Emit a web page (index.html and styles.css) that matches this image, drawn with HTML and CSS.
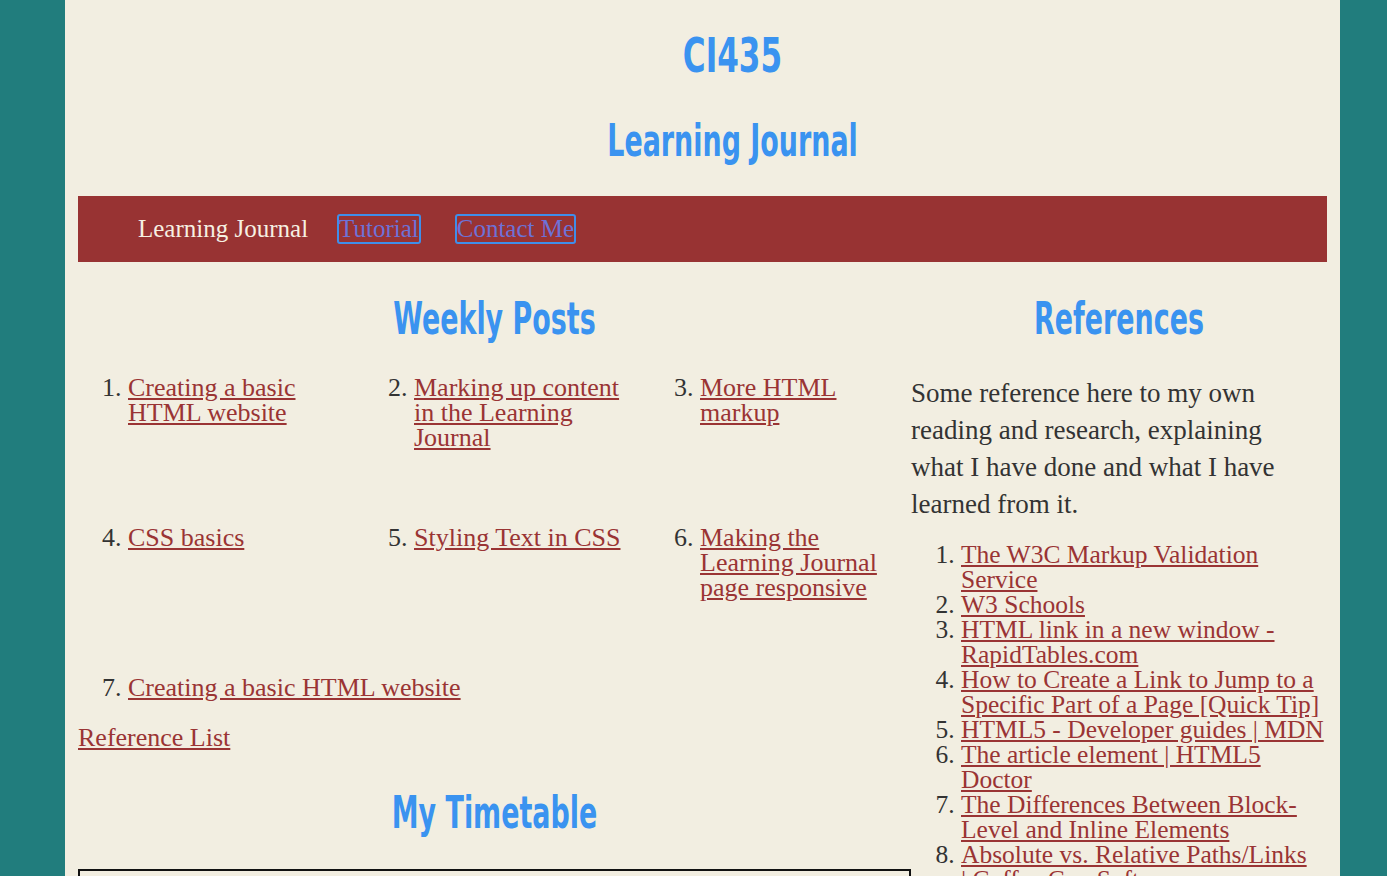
FILE: index.html
```html
<!DOCTYPE html>
<html lang="en">
<head>
<meta charset="utf-8">
<title>CI435 Learning Journal</title>
<link rel="stylesheet" href="styles.css">
</head>
<body>
<div class="page">
  <header class="site-header">
    <h1 class="site-title">CI435</h1>
    <h2 class="site-subtitle">Learning Journal</h2>
  </header>
  <nav class="main-nav">
    <span class="nav-current">Learning Journal</span>
    <a class="nav-link" href="#">Tutorial</a>
    <a class="nav-link" href="#">Contact Me</a>
  </nav>
  <main class="content">
    <section class="posts">
      <h2 class="section-title">Weekly Posts</h2>
      <ol class="post-list">
        <li><a href="#">Creating a basic HTML website</a></li>
        <li><a href="#">Marking up content in the Learning Journal</a></li>
        <li><a href="#">More HTML markup</a></li>
        <li><a href="#">CSS basics</a></li>
        <li><a href="#">Styling Text in CSS</a></li>
        <li><a href="#">Making the Learning Journal page responsive</a></li>
        <li class="wide"><a href="#">Creating a basic HTML website</a></li>
      </ol>
      <p class="ref-link"><a href="#">Reference List</a></p>
      <h2 class="section-title timetable-title">My Timetable</h2>
      <table class="timetable">
        <tr><th>Time</th><th>Monday</th><th>Tuesday</th><th>Wednesday</th><th>Thursday</th><th>Friday</th></tr>
        <tr><td>9:00</td><td>CI435</td><td></td><td></td><td></td><td></td></tr>
      </table>
    </section>
    <aside class="references">
      <h2 class="section-title">References</h2>
      <p class="intro">Some reference here to my own reading and research, explaining what I have done and what I have learned from it.</p>
      <ol class="ref-list">
        <li><a href="#">The W3C Markup Validation Service</a></li>
        <li><a href="#">W3 Schools</a></li>
        <li><a href="#">HTML link in a new window - RapidTables.com</a></li>
        <li><a href="#">How to Create a Link to Jump to a Specific Part of a Page [Quick Tip]</a></li>
        <li><a href="#">HTML5 - Developer guides | MDN</a></li>
        <li><a href="#">The article element | HTML5 Doctor</a></li>
        <li><a href="#">The Differences Between Block-Level and Inline Elements</a></li>
        <li><a href="#">Absolute vs. Relative Paths/Links <span class="keep">| Coffee</span> Cup Software</a></li>
      </ol>
    </aside>
  </main>
</div>
</body>
</html>
```

FILE: styles.css
```css
* { box-sizing: border-box; }

body {
  margin: 0;
  background: #217d7d;
  font-family: "Liberation Serif", "Times New Roman", serif;
  color: #333333;
}

.page {
  width: 1275px;
  margin: 0 47px 0 65px;
  background: #f2eee1;
  padding: 0 13px 13px;
  min-height: 876px;
}

a { color: #9a3434; }

.site-header {
  padding-top: 29px;
  padding-left: 60px;
  text-align: center;
}

.site-title,
.site-subtitle,
.section-title {
  font-family: "DejaVu Sans Condensed", "DejaVu Sans", sans-serif;
  font-weight: 700;
  color: #3a93f0;
  text-align: center;
  margin: 0;
  transform: scaleX(0.68);
}

.site-title {
  font-size: 48px;
  line-height: 52px;
  transform: scaleX(0.72);
}

.site-subtitle {
  font-size: 44px;
  line-height: 46px;
  margin-top: 37px;
}

.main-nav {
  margin-top: 32px;
  height: 66px;
  background: #983333;
  display: flex;
  align-items: center;
  padding-left: 60px;
  font-size: 25px;
  line-height: 26px;
}

.nav-current {
  color: #f6f0e2;
  margin-right: 29px;
}

.nav-link {
  color: #6d72d6;
  text-decoration: none;
  border: 2px solid #3f8eea;
  border-radius: 3px;
  padding: 0;
  margin-right: 34px;
}

.content {
  display: grid;
  grid-template-columns: 2fr 1fr;
  margin-top: 34px;
}

.section-title {
  font-size: 44px;
  line-height: 46px;
}

.post-list {
  margin: 33px 0 0;
  padding: 0 0 0 50px;
  display: grid;
  grid-template-columns: repeat(3, 211px);
  grid-template-rows: 150px 150px auto;
  column-gap: 75px;
  font-size: 26px;
  line-height: 25px;
}

.post-list li { display: list-item; }

.post-list .wide { grid-column: 1 / -1; }

.ref-link {
  margin: 25px 0 0;
  font-size: 26px;
  line-height: 25px;
}

.timetable-title { margin-top: 40px; }

.timetable {
  margin-top: 33px;
  width: 100%;
  border: 2px solid #111111;
  border-collapse: collapse;
  font-size: 22px;
}

.timetable th,
.timetable td {
  padding: 8px;
}

.intro {
  margin: 33px 0 19px;
  padding-right: 20px;
  font-size: 27px;
  line-height: 37px;
}

.ref-list {
  margin: 0;
  padding-left: 50px;
  font-size: 25.5px;
  line-height: 25px;
}

.keep { white-space: nowrap; }
```
